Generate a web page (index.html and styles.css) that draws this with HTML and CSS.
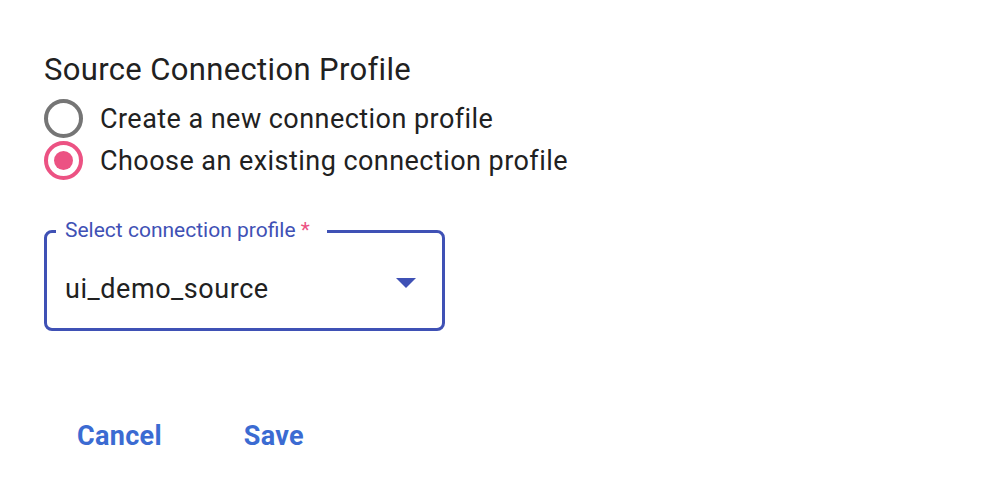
FILE: index.html
```html
<!DOCTYPE html>
<html>
<head>
<meta charset="utf-8">
<link rel="stylesheet" href="styles.css">
</head>
<body>
<div class="page">
  <h2 class="title">Source Connection Profile</h2>
  <div class="radios">
    <label class="radio"><span class="circle"></span><span class="rlabel">Create a new connection profile</span></label>
    <label class="radio checked"><span class="circle"><span class="dot"></span></span><span class="rlabel">Choose an existing connection profile</span></label>
  </div>
  <div class="field">
    <div class="legend">Select connection profile<span class="req"> *</span></div>
    <div class="value">ui_demo_source</div>
    <span class="arrow"></span>
  </div>
  <div class="actions">
    <button class="btn">Cancel</button>
    <button class="btn">Save</button>
  </div>
</div>
</body>
</html>
```
FILE: styles.css
```css
* { box-sizing: border-box; }
html, body { margin: 0; background: #fff; }
body { font-family: Roboto, "Liberation Sans", sans-serif; color: #212121; }
.page { padding: 50px 44px 0; }
.title { margin: 0; font-size: 31px; font-weight: 400; line-height: 40px; color: #212121; letter-spacing: 0.35px; }
.radios { display: flex; flex-direction: column; gap: 3px; margin-top: 9px; }
.radio { display: flex; align-items: center; gap: 17px; height: 39px; }
.circle { width: 39px; height: 39px; border: 4px solid #757575; border-radius: 50%; display: flex; align-items: center; justify-content: center; flex: none; }
.checked .circle { border-color: #ec5283; }
.dot { width: 19px; height: 19px; border-radius: 50%; background: #ec5283; }
.rlabel { font-size: 27px; line-height: 32px; letter-spacing: 0.45px; }
.field { position: relative; margin-top: 50px; width: 401px; height: 101px; border: 3px solid #3f51b5; border-radius: 8px; padding: 38px 0 0 18px; }
.legend { position: absolute; top: -17px; left: 9px; padding: 0 17px 0 9px; background: #fff; font-size: 21px; line-height: 28px; color: #3f51b5; }
.req { color: #ec5283; }
.value { font-size: 27px; line-height: 36px; color: #212121; letter-spacing: 0.55px; }
.arrow { position: absolute; right: 26px; top: 45px; width: 0; height: 0; border-left: 10px solid transparent; border-right: 10px solid transparent; border-top: 10px solid #3f51b5; }
.actions { display: flex; gap: 0; margin-top: 81px; }
.btn { background: none; border: none; font-family: inherit; font-size: 27px; font-weight: 700; color: #3b6bd2; padding: 8px 33px; line-height: 32px; letter-spacing: 0.3px; }
.btn + .btn { margin-left: 16px; }
```
